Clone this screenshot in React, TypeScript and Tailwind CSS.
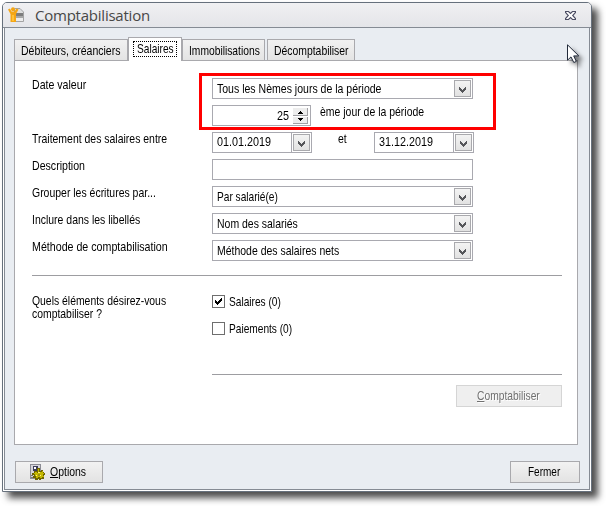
import { useState } from 'react';
import type { ReactNode } from 'react';

const TABS = [
  { label: 'Débiteurs, créanciers', className: 'w-[114px] pl-[6px]', scale: 'scale-x-[0.81]' },
  { label: 'Salaires', className: 'w-[54px] pl-[4px]', scale: 'scale-x-[0.78]' },
  { label: 'Immobilisations', className: 'w-[83px] pl-[6px]', scale: 'scale-x-[0.79]' },
  { label: 'Décomptabiliser', className: 'ml-[2px] w-[88px] pl-[6px]', scale: 'scale-x-[0.8]' },
];

// Condensed run of text, squeezed from its left edge
function Text({ scale = 'scale-x-[0.805]', children }: { scale?: string; children: ReactNode }) {
  return <span className={`inline-block origin-left ${scale}`}>{children}</span>;
}

function AppIcon() {
  return (
    <svg width="16" height="16" viewBox="0 0 16 16">
      <path d="M6.5 1.5H12L15.5 5V14.5H6.5Z" fill="#dedede" stroke="#a3a3a3" />
      <path d="M7 6H15V9H7Z" fill="#7d7d7d" />
      <path d="M7 9H15V11H7Z" fill="#a8a8a8" />
      <path d="M7 11H15V14H7Z" fill="#ececec" />
      <circle cx="5" cy="2.2" r="2" fill="#f5a614" />
      <path d="M0 2.5L2 1.5L3.5 4.5H6.5L8.5 1.5L10.5 2.5L8 7V15H2.5V7Z" fill="#f5a614" />
      <path d="M4 8H6V14H4Z" fill="#ffc23a" />
    </svg>
  );
}

function OptionsIcon() {
  return (
    <svg width="16" height="17" viewBox="0 0 16 17" shapeRendering="crispEdges">
      <path d="M0 0h11v15H0z" fill="#8c8c94" />
      <path d="M1 1h9v13H1z" fill="#d6d6dc" />
      <path d="M3 2h5v5H3z" fill="#3c3c58" />
      <path d="M4 3h2v2H4z" fill="#fff" />
      <path d="M1 11h2v1H1zM1 13h2v1H1z" fill="#777" />
      <path
        d="M8 4h2v3h1V6h2v2h1v1h1v2h-1v1h-1v1h1v2h-3v1h-2v-1H8v1H5v-2H3v-2h1v-1H2V9h2V7h3V4z"
        fill="#6e6600"
      />
      <path d="M8 5h1v3h3V7h1v2h1v1h-1v2h1v1h-2v1h-2v-1H8v1H6v-2H5v-2H4v-1h1V8h2v1h1z" fill="#c5b800" />
      <path d="M8 8h2v1H8zM6 11h1v1H6zM10 11h1v1h-1z" fill="#fff27a" />
      <path d="M8 10h2v2H8z" fill="#9c9014" />
    </svg>
  );
}

function CloseIcon() {
  return (
    <svg width="11" height="9" viewBox="0 0 11 9">
      <path
        d="M0.5 0.5H3.5L5.5 2.5L7.5 0.5H10.5V1.5L7.7 4.5L10.5 7.5V8.5H7.5L5.5 6.5L3.5 8.5H0.5V7.5L3.3 4.5L0.5 1.5Z"
        fill="#fff"
        stroke="#4c4d63"
        strokeWidth="1.1"
      />
    </svg>
  );
}

function DropButton() {
  return (
    <span className="flex h-[17px] w-[17px] shrink-0 justify-center border border-[#a9a9ad] bg-gradient-to-b from-[#f3f3f3] to-[#e2e2e2] pt-[6px]">
      <svg width="7" height="6" viewBox="0 0 7 6" shapeRendering="crispEdges">
        <path d="M0 0h1v1h1v1h1v1h1V2h1V1h1V0h1v3H6v1H5v1H4v1H3V5H2V4H1V3H0z" fill="#55565a" />
      </svg>
    </span>
  );
}

function Select({ value, scale }: { value: string; scale?: string }) {
  return (
    <div className="flex h-[21px] w-[261px] items-center border border-[#a9a9b0] bg-white pr-px pl-[4px]">
      <span className="flex-1 pt-px">
        <Text scale={scale}>{value}</Text>
      </span>
      <DropButton />
    </div>
  );
}

function DateField({ value }: { value: string }) {
  return (
    <div className="flex h-[21px] w-[100px]">
      <div className="w-[79px] border border-r-0 border-[#a9a9b0] pt-[2px] pl-[4px]">
        <Text scale="scale-x-[0.83]">{value}</Text>
      </div>
      <div className="flex w-[21px] items-center justify-center border border-[#a9a9b0]">
        <DropButton />
      </div>
    </div>
  );
}

function Spinner({ value }: { value: number }) {
  return (
    <div className="flex h-[21px] w-[99px] items-center border border-[#a9a9b0] pr-[2px]">
      <span className="flex-1 pr-[2px] text-right">
        <Text scale="scale-x-[0.83]">{value}</Text>
      </span>
      <svg width="15" height="16" viewBox="0 0 15 16" shapeRendering="crispEdges">
        <path d="M0 0h15v16H0z" fill="#ededed" />
        <path d="M0 7h15v1H0zM14 0h1v16h-1zM0 15h15v1H0z" fill="#a0a0a4" />
        <path d="M0 8h15v1H0z" fill="#fff" />
        <path d="M7 3h1v1h1v1h1v1H5V5h1V4h1zM5 10h5v1H9v1H8v1H7v-1H6v-1H5z" fill="#000" />
      </svg>
    </div>
  );
}

function Row({ label, scale, children }: { label: string; scale?: string; children?: ReactNode }) {
  return (
    <div className="flex h-[21px]">
      <div className="w-[180px] shrink-0">
        <Text scale={scale}>{label}</Text>
      </div>
      {children}
    </div>
  );
}

function Check({ label, checked, onChange }: { label: string; checked: boolean; onChange: () => void }) {
  return (
    <button type="button" onClick={onChange} className="flex h-[13px] items-center gap-[4px]">
      <span className="h-[13px] w-[13px] border border-[#6e6e6e] bg-white">
        {checked && (
          <svg width="11" height="11" viewBox="0 0 11 11" shapeRendering="crispEdges">
            <path d="M2 4h1v1h1v1h1V5h1V4h1V3h1V2h1v3H8v1H7v1H6v1H5v1H4V8H3V7H2z" fill="#000" />
          </svg>
        )}
      </span>
      <Text scale="scale-x-[0.78]">{label}</Text>
    </button>
  );
}

export default function App() {
  const [tab, setTab] = useState(1);
  const [salaires, setSalaires] = useState(true);
  const [paiements, setPaiements] = useState(false);

  return (
    <div className="h-[506px] w-[606px] overflow-hidden bg-white p-[2px] font-['Liberation_Sans',Arial,sans-serif] text-[13px] leading-[14px] whitespace-nowrap text-black">
      <div className="relative flex h-[490px] w-[590px] flex-col rounded-t-[5px] border border-[#66707c] bg-white shadow-[6px_6px_7px_rgba(0,0,0,0.7)]">
        {/* Title bar */}
        <div className="flex h-[25px] shrink-0 items-center rounded-t-[4px] border-b border-[#858b94] bg-gradient-to-b from-[#f0f0f2] to-[#e4e5e9] pr-[15px] pl-[5px]">
          <AppIcon />
          <span className="ml-[11px] flex-1 font-['Open_Sans',sans-serif] text-[15px] leading-[20px] tracking-[-0.23px] text-[#474747]">
            Comptabilisation
          </span>
          <CloseIcon />
        </div>

        <div className="flex-1 px-px pb-px">
          <div className="h-full border border-t-0 border-[#858b94] bg-[#e9edf2] pt-[9px] pl-[9px]">
            {/* Tabs */}
            <div className="flex h-[23px] items-end">
              {TABS.map((t, i) => (
                <button
                  type="button"
                  key={t.label}
                  onClick={() => setTab(i)}
                  className={`${t.className} flex items-center border border-b-0 border-[#a9a9ad] ${
                    i === tab
                      ? 'relative -mb-px h-[24px] bg-white pb-px'
                      : 'h-[21px] bg-gradient-to-b from-[#f1f1f1] to-[#e4e4e4] pt-[2px]'
                  }`}
                >
                  <span className={i === tab ? 'h-[16px] w-[44px] border border-dotted border-black pl-[3px] text-left' : ''}>
                    <Text scale={t.scale}>{t.label}</Text>
                  </span>
                </button>
              ))}
            </div>

            <div className="h-[385px] w-[564px] border border-[#a9a9ad] bg-white pt-[17px] pl-[17px]">
              <div className="relative flex flex-col gap-[6px]">
                <Row label="Date valeur" scale="scale-x-[0.815]">
                  <Select value="Tous les Nèmes jours de la période" scale="scale-x-[0.81]" />
                </Row>
                <Row label="">
                  <Spinner value={25} />
                  <span className="ml-[9px]">
                    <Text>ème jour de la période</Text>
                  </span>
                </Row>
                <Row label="Traitement des salaires entre">
                  <DateField value="01.01.2019" />
                  <span className="w-[62px] pl-[26px]">
                    <Text>et</Text>
                  </span>
                  <DateField value="31.12.2019" />
                </Row>
                <Row label="Description" scale="scale-x-[0.815]">
                  <div className="h-[21px] w-[261px] border border-[#a9a9b0]" />
                </Row>
                <Row label="Grouper les écritures par...">
                  <Select value="Par salarié(e)" scale="scale-x-[0.78]" />
                </Row>
                <Row label="Inclure dans les libellés">
                  <Select value="Nom des salariés" />
                </Row>
                <Row label="Méthode de comptabilisation" scale="scale-x-[0.82]">
                  <Select value="Méthode des salaires nets" />
                </Row>
                <div className="pointer-events-none absolute -top-[5px] left-[167px] h-[57px] w-[297px] border-[3px] border-[#f00]" />
              </div>

              <div className="mt-[14px] h-px w-[530px] bg-[#9d9da1]" />

              <div className="mt-[18px] flex w-[530px]">
                <div className="w-[180px] leading-[13px]">
                  <Text scale="scale-x-[0.8]">
                    Quels éléments désirez-vous
                    <br />
                    comptabiliser ?
                  </Text>
                </div>
                <div className="flex-1 pt-px">
                  <div className="flex flex-col gap-[14px]">
                    <Check label="Salaires (0)" checked={salaires} onChange={() => setSalaires(!salaires)} />
                    <Check label="Paiements (0)" checked={paiements} onChange={() => setPaiements(!paiements)} />
                  </div>
                  <div className="mt-[39px] h-px bg-[#9d9da1]" />
                  <button
                    type="button"
                    disabled
                    className="mt-[10px] ml-auto flex h-[22px] w-[106px] items-center border border-[#d5d5d5] bg-[#efefef] pl-[20px] text-[#707070] [text-shadow:1px_1px_0_#fff]"
                  >
                    <Text scale="scale-x-[0.79]">
                      <u>C</u>omptabiliser
                    </Text>
                  </button>
                </div>
              </div>
            </div>

            {/* Footer */}
            <div className="mt-[16px] flex justify-between pr-[9px] pl-px">
              <button
                type="button"
                className="flex h-[22px] w-[88px] items-center border border-[#a9a9ad] bg-gradient-to-b from-[#f2f2f2] to-[#e3e3e3] pl-[14px]"
              >
                <OptionsIcon />
                <span className="ml-[4px]">
                  <Text>
                    <u>O</u>ptions
                  </Text>
                </span>
              </button>
              <button
                type="button"
                className="flex h-[22px] w-[70px] items-center border border-[#a9a9ad] bg-gradient-to-b from-[#f2f2f2] to-[#e3e3e3] pl-[17px]"
              >
                <Text scale="scale-x-[0.77]">Fermer</Text>
              </button>
            </div>
          </div>
        </div>

        {/* Mouse pointer */}
        <svg
          width="13"
          height="20"
          viewBox="0 0 13 20"
          className="pointer-events-none absolute top-[41px] left-[564px] [filter:drop-shadow(4px_4px_2px_rgba(0,0,0,0.5))]"
        >
          <path d="M0.5 0.8V16.2L4 12.9L6.8 18.5L9.3 17.4L6.7 11.9H11.8Z" fill="#fff" stroke="#222a3a" />
        </svg>
      </div>
    </div>
  );
}
